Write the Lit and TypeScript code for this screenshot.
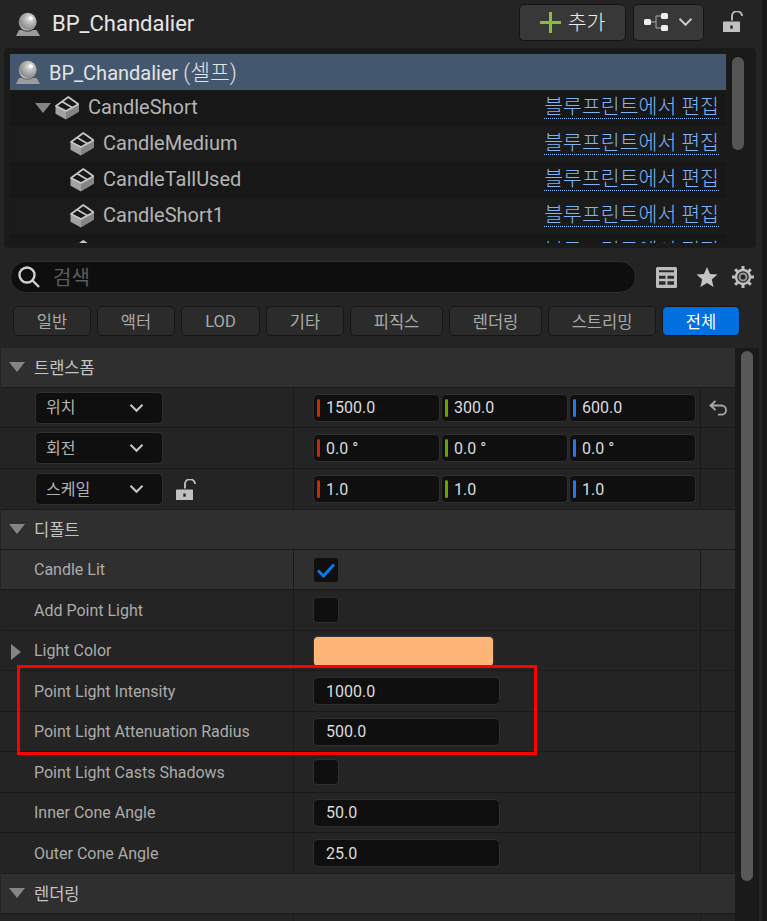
import { LitElement, html, css } from "lit";
import { customElement } from "lit/decorators.js";

const actorIcon = () => html`<svg class="ic" width="24" height="24" viewBox="0 0 24 24">
  <defs><radialGradient id="ball" cx="0.62" cy="0.32" r="0.75">
    <stop offset="0" stop-color="#e8e8e8"/><stop offset="0.4" stop-color="#b4b4b4"/><stop offset="0.8" stop-color="#8c8c8c"/><stop offset="1" stop-color="#e4e4e4"/>
  </radialGradient></defs>
  <path d="M3 18h3.500c1.400 1 3.200 1.500 5.200 1.500s3.800-.5 5.200-1.500H20.500L24 24H0Z" fill="#9c9c9c"/>
  <circle cx="11.700" cy="9.800" r="9" fill="url(#ball)"/>
  <circle cx="14.800" cy="6.300" r="2" fill="#fff"/>
</svg>`;

const cubeIcon = html`<svg class="ic" width="24" height="24" viewBox="0 0 24 24">
  <path d="M.5 10V17.700L11 23.500V15Z" fill="#a2a2a2"/>
  <path d="M11 15V23.500L24 15.700V8.300Z" fill="#858585"/>
  <path d="M1 10 13.300 1 23.500 8.300 11 15Z" fill="#181818" stroke="#c8c8c8" stroke-width="1.700" stroke-linejoin="round"/>
  <path d="M7 5.500 17.500 11.800" stroke="#c8c8c8" stroke-width="1.700" fill="none"/>
</svg>`;

const lockIcon = html`<svg class="ic" width="21" height="21" viewBox="0 0 21 21">
  <path d="M8.500 10V6a5 5 0 0 1 10-.5" fill="none" stroke="#bdbdbd" stroke-width="1.900" transform="translate(.5 -.5)"/>
  <path d="M0 11.500c0-.6.400-1 1-1h15c.6 0 1 .4 1 1V21H0Z" fill="#c0c0c0"/>
  <rect x="7.300" y="14.500" width="2.400" height="3.200" fill="#222"/>
</svg>`;

const chevron = html`<svg class="ic" width="15" height="10" viewBox="0 0 15 10"><path d="M1.500 1.800 7.500 7.800 13.500 1.800" fill="none" stroke="#c8c8c8" stroke-width="2"/></svg>`;
const caretDown = html`<svg class="ic" width="16" height="10" viewBox="0 0 16 10"><path d="M0 0H16L8 10Z" fill="#858585"/></svg>`;
const caretRight = html`<svg class="ic" width="10" height="16" viewBox="0 0 10 16"><path d="M0 0V16L10 8Z" fill="#858585"/></svg>`;

type Row =
  | { kind: "head"; label: string; h: number }
  | { kind: "vec"; label: string; vals: string[]; h: number; lock?: boolean; reset?: boolean }
  | { kind: "num"; label: string; val: string; h: number }
  | { kind: "check"; label: string; on: boolean; h: number; hi?: boolean }
  | { kind: "color"; label: string; h: number };

const rows: Row[] = [
  { kind: "head", label: "트랜스폼", h: 40 },
  { kind: "vec", label: "위치", vals: ["1500.0", "300.0", "600.0"], h: 40, reset: true },
  { kind: "vec", label: "회전", vals: ["0.0 °", "0.0 °", "0.0 °"], h: 41 },
  { kind: "vec", label: "스케일", vals: ["1.0", "1.0", "1.0"], h: 41, lock: true },
  { kind: "head", label: "디폴트", h: 40 },
  { kind: "check", label: "Candle Lit", on: true, h: 40, hi: true },
  { kind: "check", label: "Add Point Light", on: false, h: 41 },
  { kind: "color", label: "Light Color", h: 40 },
  { kind: "num", label: "Point Light Intensity", val: "1000.0", h: 41 },
  { kind: "num", label: "Point Light Attenuation Radius", val: "500.0", h: 40 },
  { kind: "check", label: "Point Light Casts Shadows", on: false, h: 41 },
  { kind: "num", label: "Inner Cone Angle", val: "50.0", h: 40 },
  { kind: "num", label: "Outer Cone Angle", val: "25.0", h: 41 },
  { kind: "head", label: "렌더링", h: 40 },
];

const tree = [
  { name: "CandleShort", indent: "lvl1" },
  { name: "CandleMedium", indent: "lvl2" },
  { name: "CandleTallUsed", indent: "lvl2" },
  { name: "CandleShort1", indent: "lvl2" },
  { name: "CandleShort2", indent: "lvl2" },
];

const filters: [string, number, boolean][] = [
  ["일반", 78, false], ["액터", 78, false], ["LOD", 79, false], ["기타", 78, false],
  ["피직스", 93, false], ["렌더링", 93, false], ["스트리밍", 108, false], ["전체", 78, true],
];

@customElement("app-root")
export class AppRoot extends LitElement {
  static styles = css`
    :host { display: block; width: 767px; height: 921px; overflow: hidden; position: relative; background: #242424;
      font-family: Roboto, "Noto Sans CJK KR", sans-serif; font-size: 16px; color: #c0c0c0; }
    * { box-sizing: border-box; }
    .ic { display: block; flex: none; }
    .frame { display: flex; height: 921px; }
    .main { width: 762px; flex: none; display: flex; flex-direction: column; }
    .edge { flex: 1; background: #181818; }

    .top { height: 48px; display: flex; align-items: center; padding: 0 18px 1px 16px; }
    .title { font-size: 22px; color: #e6e6e6; margin-left: 12px; flex: 1; }
    .tbtn { height: 37px; margin-top: -3px; background: #383838; border: 1px solid #151515; border-radius: 5px; display: flex; align-items: center; justify-content: center; }
    .add { width: 107px; gap: 7px; font-size: 20.5px; font-weight: 300; color: #ececec; }
    .add span { margin-bottom: 2px; }
    .layout { width: 71px; margin-left: 7px; gap: 10px; margin-right: 19px; }
    .toplock { margin-top: -5px; }

    .treebox { height: 200px; margin: 0 6px 0 4px; background: #1a1a1a; border-radius: 5px; padding: 6px 12px 5px 6px; display: flex; gap: 6px; }
    .tree { flex: 1; min-width: 0; overflow: hidden; }
    .trow { height: 36px; display: flex; align-items: center; font-size: 20px; color: #b4b4b4; padding-right: 7px; background: #171717; }
    .trow:nth-child(odd) { background: #1b1b1b; }
    .trow.sel { background: #43586e; color: #e4e4e4; padding-left: 6px; gap: 9px; }
    .trow.sel > span { margin-bottom: 3px; }
    .ko { font-size: 21.5px; font-weight: 300; }
    .lvl1 { padding-left: 25px; }
    .lvl2 { padding-left: 60px; }
    .lvl1 .caret { margin-right: 4px; }
    .name { flex: 1; margin: 0 0 2px 9px; }
    .link { font-size: 20.5px; font-weight: 300; color: #7fb3f5; border-bottom: 1px dotted #8fc0ff; line-height: 22px; height: 23px; margin-bottom: 1px; }
    .thumb { width: 12px; height: 93px; margin-top: 3px; border-radius: 6px; background: #555; flex: none; }

    .search { display: flex; align-items: center; height: 32px; margin-top: 13px; padding-left: 10px; }
    .sbox { width: 626px; height: 32px; background: #0e0e0e; border: 1px solid #2f2f2f; border-radius: 16px; display: flex; align-items: center; padding-left: 6px; gap: 13px; color: #5d5d5d; font-size: 20px; padding-bottom: 2px; }
    .sicons { display: flex; align-items: center; margin-left: 20px; }
    .star { margin-left: 19px; }
    .gear { margin-left: 14px; }

    .filters { display: flex; gap: 6px; margin: 13px 0 12px 13px; height: 30px; }
    .f { height: 30px; flex: none; background: #2b2b2b; border: 1px solid #151515; border-radius: 5px; display: flex; align-items: center; justify-content: center; font-size: 16.5px; color: #a9a9a9; }
    .f.on { background: #0070e0; color: #fff; }

    .details { display: flex; height: 573px; padding-left: 1px; }
    .plist { width: 734px; flex: none; overflow: hidden; }
    .track { width: 24px; background: #1a1a1a; padding: 3px 0 0 6px; }
    .bar { width: 12px; height: 530px; border-radius: 6px; background: #585858; }

    .head { display: flex; align-items: center; background: #2f2f2f; border-bottom: 1px solid #1a1a1a; color: #c4c4c4; padding: 0 0 2px 8px; gap: 9px; font-size: 16.5px; }
    .prow { display: grid; grid-template-columns: 293px 407px 34px; background: #242424; border-bottom: 1px solid #1a1a1a; }
    .prow.hi { background: #2f2f2f; }
    .cell { display: flex; align-items: center; border-right: 1px solid #1a1a1a; min-width: 0; }
    .cell.l { padding-left: 33px; color: #ababab; }
    .cell.m { padding-left: 19px; gap: 1px; }
    .cell:last-child { border-right: 0; justify-content: center; }
    .arrow { position: absolute; left: -23px; top: 3px; }
    .lbl { position: relative; }
    .select { width: 128px; height: 32px; margin-left: 1px; background: #0f0f0f; border: 1px solid #2f2f2f; border-radius: 5px; display: flex; align-items: center; justify-content: space-between; padding: 0 18px 0 10px; font-size: 16px; color: #b4b4b4; }
    .select span { margin-bottom: 3px; }
    .lockwrap { margin-left: 13px; }
    .num { width: 127px; height: 28px; background: #0f0f0f; border: 1px solid #2f2f2f; border-radius: 5px; display: flex; align-items: center; padding-left: 3px; gap: 6px; color: #dcdcdc; font-size: 16px; }
    .num i { width: 3px; height: 18px; border-radius: 1.5px; flex: none; }
    .x { background: #c62a06; } .y { background: #6aa304; } .z { background: #2a78e8; }
    .single { width: 187px; padding-left: 12px; }
    .chk { width: 26px; height: 26px; background: #0f0f0f; border: 1px solid #2f2f2f; border-radius: 4px; display: flex; align-items: center; justify-content: center; }
    .swatch { width: 179px; height: 29px; background: #ffb478; border-radius: 4px; box-shadow: 0 0 0 1px #383838; margin: 1px 0 0 1px; }
    .bottomrow { height: 20px; }

    .redbox { position: absolute; left: 17px; top: 665px; width: 520px; height: 90px; border: 3px solid #ff0000; pointer-events: none; }
  `;

  private cellsFor(r: Row) {
    if (r.kind === "vec") {
      const axes = ["x", "y", "z"];
      return html`<div class="cell l"><div class="select"><span>${r.label}</span>${chevron}</div>
          ${r.lock ? html`<div class="lockwrap">${lockIcon}</div>` : ""}</div>
        <div class="cell m">${r.vals.map((v, i) => html`<div class="num"><i class=${axes[i]}></i><span>${v}</span></div>`)}</div>
        <div class="cell">${r.reset ? html`<svg class="ic" width="19" height="16" viewBox="0 0 19 16"><path d="M6.500 1 1.500 5.500 6.500 10M2 5.500H12.500a4.600 4.600 0 0 1 0 9.200H9" fill="none" stroke="#a8a8a8" stroke-width="1.800"/></svg>` : ""}</div>`;
    }
    if (r.kind === "head") return "";
    const label = html`<div class="cell l"><span class="lbl">${r.kind === "color" ? html`<span class="arrow">${caretRight}</span>` : ""}${r.label}</span></div>`;
    let mid;
    if (r.kind === "num") mid = html`<div class="num single">${r.val}</div>`;
    else if (r.kind === "check") mid = html`<div class="chk">${r.on ? html`<svg class="ic" width="20" height="16" viewBox="0 0 20 16"><path d="M2 8.500 7.500 14 18 2.500" fill="none" stroke="#0a78e6" stroke-width="3"/></svg>` : ""}</div>`;
    else mid = html`<div class="swatch"></div>`;
    return html`${label}<div class="cell m">${mid}</div><div class="cell"></div>`;
  }

  render() {
    return html`<div class="frame"><div class="main">
      <div class="top">
        ${actorIcon()}
        <div class="title">BP_Chandalier</div>
        <div class="tbtn add">
          <svg class="ic" width="21" height="21" viewBox="0 0 21 21"><path d="M10.500 0V21M0 10.500H21" stroke="#86bf3c" stroke-width="3"/></svg>
          <span>추가</span>
        </div>
        <div class="tbtn layout">
          <svg class="ic" width="24" height="20" viewBox="0 0 24 20"><path d="M7 10H12M12 4H17M12 16H17M12 4V16" fill="none" stroke="#8a8a8a" stroke-width="1.400"/><rect x="0" y="7" width="7" height="6" rx="1.500" fill="#eee"/><rect x="17" y="1" width="7" height="6" rx="1.500" fill="#eee"/><rect x="17" y="13" width="7" height="6" rx="1.500" fill="#eee"/></svg>
          ${chevron}
        </div>
        <div class="toplock">${lockIcon}</div>
      </div>

      <div class="treebox">
        <div class="tree">
          <div class="trow sel">${actorIcon()}<span>BP_Chandalier <span class="ko">(셀프)</span></span></div>
          ${tree.map((t, i) => html`<div class="trow ${t.indent}">
            ${i === 0 ? html`<span class="caret">${caretDown}</span>` : ""}${cubeIcon}
            <span class="name">${t.name}</span><span class="link">블루프린트에서 편집</span></div>`)}
        </div>
        <div class="thumb"></div>
      </div>

      <div class="search">
        <div class="sbox">
          <svg class="ic" width="23" height="23" viewBox="0 0 23 23"><circle cx="10" cy="10" r="7.500" fill="none" stroke="#d0d0d0" stroke-width="2.400"/><path d="M15.500 15.500 22 22" stroke="#d0d0d0" stroke-width="2.400"/></svg>
          <span>검색</span>
        </div>
        <div class="sicons">
          <svg class="ic" width="21" height="21" viewBox="0 0 21 21"><rect width="21" height="21" rx="1.500" fill="#bcbcbc"/><path d="M3 3.300H18V5.300H3ZM3 8.700H9.500V11.700H3ZM11.500 8.700H18V11.700H11.500ZM3 14.300H9.500V17.700H3ZM11.500 14.300H18V17.700H11.500Z" fill="#2a2a2a"/></svg>
          <svg class="ic star" width="22" height="22" viewBox="0 0 22 22"><path d="M11 1 14 8 21.500 8.600 15.800 13.500 17.600 21 11 17 4.400 21 6.200 13.500.5 8.600 8 8Z" fill="#c4c4c4"/></svg>
          <svg class="ic gear" width="22" height="22" viewBox="0 0 22 22"><circle cx="11" cy="11" r="7" fill="none" stroke="#c0c0c0" stroke-width="2.400"/><circle cx="11" cy="11" r="3.500" fill="none" stroke="#9a9a9a" stroke-width="2"/><path d="M11 0V4M11 18V22M0 11H4M18 11H22M3.200 3.200 6 6M16 16 18.800 18.800M18.800 3.200 16 6M6 16 3.200 18.800" stroke="#c0c0c0" stroke-width="3"/></svg>
        </div>
      </div>

      <div class="filters">
        ${filters.map(([t, w, on]) => html`<div class="f ${on ? "on" : ""}" style="width:${w}px">${t}</div>`)}
      </div>

      <div class="details">
        <div class="plist">
          ${rows.map((r) => r.kind === "head"
            ? html`<div class="head" style="height:${r.h}px">${caretDown}<span>${r.label}</span></div>`
            : html`<div class="prow ${r.kind === "check" && r.hi ? "hi" : ""}" style="height:${r.h}px">${this.cellsFor(r)}</div>`)}
          <div class="prow bottomrow"><div class="cell"></div><div class="cell"></div><div class="cell"></div></div>
        </div>
        <div class="track"><div class="bar"></div></div>
      </div>
    </div><div class="edge"></div>
    <div class="redbox"></div></div>`;
  }
}
